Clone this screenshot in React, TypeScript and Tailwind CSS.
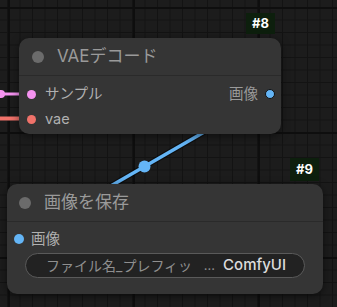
import React from "react";

const font = { fontFamily: '"Inter", "Noto Sans CJK JP", sans-serif' };

export default function App() {
  return (
    <div
      className="relative w-[337px] h-[307px] overflow-hidden bg-[#1c1c1c]"
      style={{
        ...font,
        backgroundImage:
          "linear-gradient(to right, #0e0e0e 2px, transparent 2px), linear-gradient(to bottom, #0e0e0e 2px, transparent 2px), linear-gradient(to right, #131313 1px, transparent 1px), linear-gradient(to bottom, #131313 1px, transparent 1px)",
        backgroundSize: "125px 125px, 125px 125px, 12.5px 12.5px, 12.5px 12.5px",
        backgroundPosition: "8px 7px, 8px 7px, 7px 7px, 7px 7px",
      }}
    >
      {/* links */}
      <svg className="absolute inset-0" width="337" height="307">
        <line x1="270" y1="94" x2="19" y2="239" stroke="#000" strokeOpacity="0.5" strokeWidth="6" />
        <line x1="270" y1="94" x2="19" y2="239" stroke="#64b5f6" strokeWidth="3.5" />
        <circle cx="144.5" cy="166.5" r="6" fill="#64b5f6" />
        <line x1="0" y1="94" x2="30" y2="94" stroke="#f593f0" strokeWidth="3" />
        <circle cx="1" cy="94" r="4" fill="#f593f0" />
        <line x1="0" y1="118.5" x2="30" y2="118.5" stroke="#f0726a" strokeWidth="4" />
      </svg>

      {/* badge #8 */}
      <div className="absolute left-[246px] top-[13px] h-[21px] px-[6px] flex items-center bg-[#0d1f0d] text-white text-[13px] font-bold">
        #8
      </div>

      {/* Node 8 */}
      <div className="absolute left-[19px] top-[38px] w-[262px] h-[96px] rounded-[10px] bg-[#353535] shadow-[0_2px_8px_rgba(0,0,0,0.5)] flex flex-col">
        <div className="h-[38px] flex items-center border-b border-[#2a2a2a]">
          <span className="ml-[13px] w-[12px] h-[12px] rounded-full bg-[#6b6b6b]" />
          <span className="ml-[13px] text-[17px] text-[#9a9a9a]">VAEデコード</span>
        </div>
        <div className="flex justify-between mt-[8px] h-[20px] items-center">
          <div className="flex items-center">
            <span className="ml-[8px] w-[9px] h-[9px] rounded-full bg-[#f593f0]" />
            <span className="ml-[9px] text-[14.5px] text-[#b0b0b0]">サンプル</span>
          </div>
          <div className="flex items-center">
            <span className="text-[14.5px] text-[#9a9a9a]">画像</span>
            <span className="ml-[7px] mr-[6px] w-[10px] h-[10px] rounded-full bg-[#64b5f6] border border-[#111]" />
          </div>
        </div>
        <div className="flex items-center mt-[5px] h-[20px]">
          <span className="ml-[8px] w-[9px] h-[9px] rounded-full bg-[#f0726a]" />
          <span className="ml-[9px] text-[14.5px] text-[#b0b0b0]">vae</span>
        </div>
      </div>

      {/* badge #9 */}
      <div className="absolute left-[290px] top-[158px] h-[23px] px-[6px] flex items-center bg-[#0d1f0d] text-white text-[13px] font-bold">
        #9
      </div>

      {/* Node 9 */}
      <div className="absolute left-[7px] top-[184px] w-[316px] h-[110px] rounded-[10px] bg-[#353535] shadow-[0_2px_8px_rgba(0,0,0,0.5)] flex flex-col">
        <div className="h-[38px] flex items-center border-b border-[#2a2a2a]">
          <span className="ml-[12px] w-[12px] h-[12px] rounded-full bg-[#6b6b6b]" />
          <span className="ml-[13px] text-[17px] text-[#9a9a9a]">画像を保存</span>
        </div>
        <div className="flex items-center mt-[7px] h-[20px]">
          <span className="ml-[7px] w-[10px] h-[10px] rounded-full bg-[#64b5f6]" />
          <span className="ml-[7px] text-[14.5px] text-[#b0b0b0]">画像</span>
        </div>
        <div className="mx-[18px] mt-[4px] h-[25px] rounded-full border border-[#5a5a5a] bg-[#222222] flex items-center justify-between pl-[20px] pr-[18px]">
          <span className="text-[14px] text-[#8f8f8f]">ファイル名_プレフィッ</span>
          <span className="flex items-center gap-[8px]">
            <span className="text-[13px] text-[#8f8f8f]">...</span>
            <span className="text-[15px] font-medium text-[#dcdcdc]">ComfyUI</span>
          </span>
        </div>
      </div>
    </div>
  );
}
